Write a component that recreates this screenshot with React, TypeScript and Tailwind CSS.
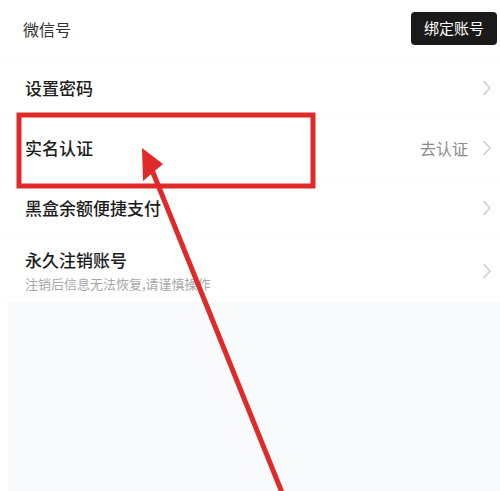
import React from "react";

const Chevron = () => (
  <svg width="10" height="16" viewBox="0 0 10 16" fill="none" className="shrink-0">
    <path d="M2 1.5 L8 8 L2 14.5" stroke="#cfcfcf" strokeWidth="1.6" strokeLinecap="round" strokeLinejoin="round" />
  </svg>
);

const Row = ({ title, right, sub, h }: { title: string; right?: string; sub?: string; h: string }) => (
  <div className={`flex items-center justify-between pl-[25px] pr-[8px] border-b border-[#f8f8f8] ${h}`}>
    <div className="flex flex-col">
      <span className="text-[17px] font-medium text-[#1c1c1c] leading-[24px]">{title}</span>
      {sub && <span className="text-[13px] text-[#a8a8a8] leading-[20px] mt-[2px]">{sub}</span>}
    </div>
    <div className="flex items-center gap-[14px]">
      {right && <span className="text-[16px] text-[#8a8a8a]">{right}</span>}
      <Chevron />
    </div>
  </div>
);

export default function App() {
  return (
    <div
      className="relative w-[500px] h-[491px] bg-white flex flex-col overflow-hidden"
      style={{ fontFamily: '"Noto Sans CJK SC", "Noto Sans", sans-serif' }}
    >
      <div className="flex items-center justify-between h-[58px] pl-[23px] pr-[3px] border-b border-[#f8f8f8]">
        <span className="text-[16px] text-[#333]">微信号</span>
        <div className="bg-[#1a1a1a] text-white text-[15px] rounded-[4px] w-[86px] h-[33px] flex items-center justify-center">
          绑定账号
        </div>
      </div>
      <Row title="设置密码" h="h-[61px]" />
      <Row title="实名认证" right="去认证" h="h-[59px]" />
      <Row title="黑盒余额便捷支付" h="h-[61px]" />
      <Row title="永久注销账号" sub="注销后信息无法恢复,请谨慎操作" h="h-[64px]" />
      <div className="flex-1 ml-[8px] bg-[#f9fafb]" />

      <svg className="absolute inset-0 pointer-events-none" width="500" height="491" viewBox="0 0 500 491">
        <rect x="19" y="115" width="294" height="71" fill="none" stroke="#e02a2a" strokeWidth="5" />
        <line x1="283" y1="495" x2="152" y2="170" stroke="#e02a2a" strokeWidth="5" />
        <polygon points="142,148 143,181 163,164" fill="#e02a2a" />
      </svg>
    </div>
  );
}
